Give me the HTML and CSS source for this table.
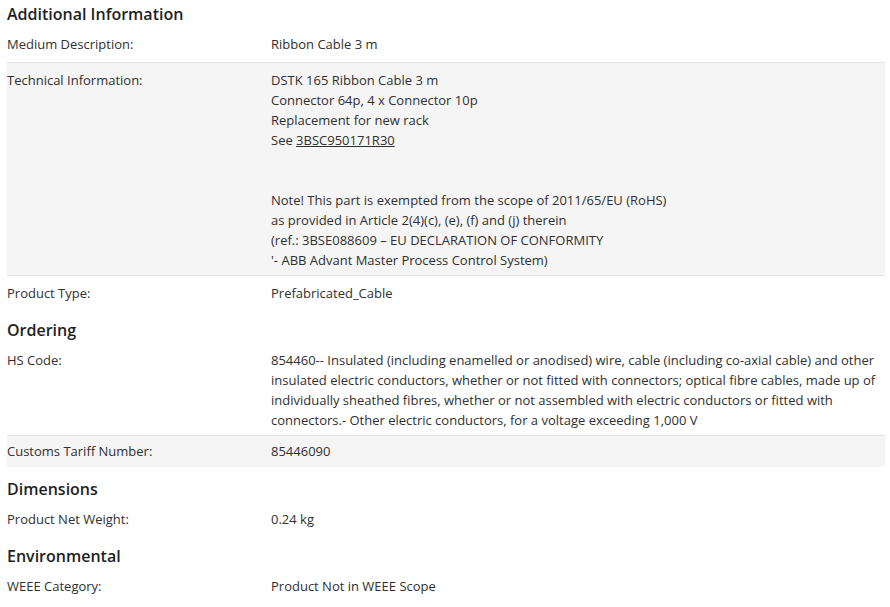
FILE: index.html
```html
<!DOCTYPE html>
<html>
<head>
<meta charset="utf-8">
<link rel="stylesheet" href="styles.css">
</head>
<body>
<div class="page">
  <h2 class="section-title first">Additional Information</h2>
  <div class="row row-lead">
    <div class="label">Medium Description:</div>
    <div class="value">Ribbon Cable 3 m</div>
  </div>
  <div class="row shaded bordered">
    <div class="label">Technical Information:</div>
    <div class="value">DSTK 165 Ribbon Cable 3 m<br>Connector 64p, 4 x Connector 10p<br>Replacement for new rack<br>See <a class="link" href="#">3BSC950171R30</a><br><br><br>Note! This part is exempted from the scope of 2011/65/EU (RoHS)<br>as provided in Article 2(4)(c), (e), (f) and (j) therein<br>(ref.: 3BSE088609 – EU DECLARATION OF CONFORMITY<br>'- ABB Advant Master Process Control System)</div>
  </div>
  <div class="row">
    <div class="label">Product Type:</div>
    <div class="value">Prefabricated_Cable</div>
  </div>

  <h2 class="section-title">Ordering</h2>
  <div class="row">
    <div class="label">HS Code:</div>
    <div class="value">854460-- Insulated (including enamelled or anodised) wire, cable (including co-axial cable) and other insulated electric conductors, whether or not fitted with connectors; optical fibre cables, made up of individually sheathed fibres, whether or not assembled with electric conductors or fitted with connectors.- Other electric conductors, for a voltage exceeding 1,000 V</div>
  </div>
  <div class="row shaded bordered-top row-compact">
    <div class="label">Customs Tariff Number:</div>
    <div class="value">85446090</div>
  </div>

  <h2 class="section-title">Dimensions</h2>
  <div class="row">
    <div class="label">Product Net Weight:</div>
    <div class="value">0.24 kg</div>
  </div>

  <h2 class="section-title">Environmental</h2>
  <div class="row">
    <div class="label">WEEE Category:</div>
    <div class="value">Product Not in WEEE Scope</div>
  </div>
</div>
</body>
</html>
```

FILE: styles.css
```css
html, body {
  margin: 0;
  padding: 0;
  background: #ffffff;
}
body {
  font-family: "Open Sans", "Noto Sans", sans-serif;
  font-size: 13px;
  line-height: 20px;
  color: #303030;
}
.page {
  width: 878px;
  padding: 0 0 0 7px;
}
.section-title {
  margin: 0;
  font-size: 16px;
  font-weight: 600;
  line-height: 22px;
  color: #1f1f1f;
  padding: 11px 0 2px 0;
}
.section-title.first {
  padding-top: 3px;
}
.row {
  display: grid;
  grid-template-columns: 264px 1fr;
  padding: 7px 0 5px 0;
}
.row.row-lead {
  padding-bottom: 8px;
}
.row.row-compact {
  padding: 5px 0 6px 0;
}
.row.bordered {
  border-top: 1px solid #e2e2e2;
  border-bottom: 1px solid #e2e2e2;
}
.row.bordered-top {
  border-top: 1px solid #e2e2e2;
}
.shaded {
  background: #f5f5f5;
}
.link {
  color: #303030;
  text-decoration: underline;
}
```
